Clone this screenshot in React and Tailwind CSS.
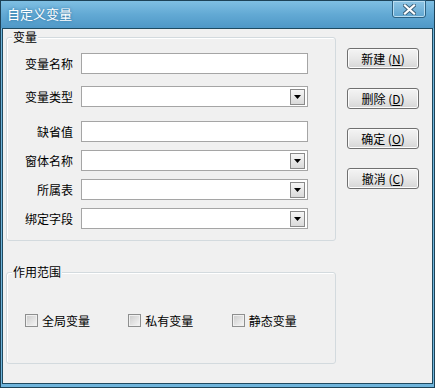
import React from "react";

const font = { fontFamily: '"Noto Sans CJK SC", "Liberation Sans", sans-serif' };

function DropArrow() {
    return (
        <div className="w-[15px] h-[16px] border border-[#8a8a8a] bg-gradient-to-b from-[#f6f6f6] to-[#dadada] flex items-center justify-center">
            <svg width="7" height="4" viewBox="0 0 7 4">
                <path d="M0 0H7L3.5 4Z" fill="#000" />
            </svg>
        </div>
    );
}

function Field({ label, select, className }) {
    return (
        <div className={"flex items-center h-[21px] " + className}>
            <div className="w-[66px] text-right text-[12px] leading-none text-black">{label}</div>
            <div className="ml-[8px] w-[227px] h-[21px] border border-[#a5a5a5] bg-white flex items-center justify-end pr-[2px]">
                {select && <DropArrow />}
            </div>
        </div>
    );
}

function Btn({ text, hot }) {
    return (
        <div className="w-[72px] h-[21px] rounded-[3px] border border-[#707070] bg-gradient-to-b from-[#f4f4f4] via-[#e8e8e8] to-[#d6d6d6] shadow-[inset_0_0_0_1px_#fcfcfc] flex items-center justify-center text-[12px] leading-none text-black">
            {text} (<span className="underline underline-offset-1">{hot}</span>)
        </div>
    );
}

function Check({ label }) {
    return (
        <div className="w-[105px] flex items-center">
            <div className="w-[13px] h-[13px] border border-[#8e8f8f] bg-gradient-to-br from-[#cbcbcb] to-[#f7f7f7] shadow-[inset_0_0_0_1px_#f0f0f0]" />
            <span className="ml-[4px] text-[12px] leading-none text-black">{label}</span>
        </div>
    );
}

export default function App() {
    return (
        <div className="w-[435px] h-[388px] flex flex-col bg-[#6fb4db] border border-[#1d4257]" style={font}>
            {/* 标题栏 */}
            <div className="h-[27px] flex justify-between bg-gradient-to-b from-[#7fbfe3] via-[#62a9d4] to-[#4f98c7]">
                <div className="pl-[6px] pt-[6px] text-[13px] leading-none text-white [text-shadow:0_0_3px_#2a6f9c]">自定义变量</div>
                <div className="mr-[8px] -mt-px w-[34px] h-[18px] rounded-b-[3px] border border-[#2d6283] bg-gradient-to-b from-[#8ec6e6] to-[#5fa5d0] shadow-[inset_0_0_0_1px_#b9def2] flex items-center justify-center">
                    <svg width="13" height="11" viewBox="0 0 13 11">
                        <path d="M2 1.5L11 9.5M11 1.5L2 9.5" stroke="#3a5f78" strokeWidth="4" strokeLinecap="square" />
                        <path d="M2 1.5L11 9.5M11 1.5L2 9.5" stroke="#fff" strokeWidth="2.2" strokeLinecap="square" />
                    </svg>
                </div>
            </div>

            {/* 客户区 */}
            <div className="flex-1 mx-[1px] mb-[3px] bg-[#f0f0f0] border border-[#1e4a60] flex flex-col">
                <div className="flex">
                    <div className="relative ml-[3px] mt-[8px] w-[330px] h-[204px] border border-[#d3dade] rounded-[3px] shadow-[inset_1px_1px_0_#fff]">
                        <div className="absolute left-[5px] -top-[7px] px-[1px] bg-[#f0f0f0] text-[12px] leading-none text-black">变量</div>
                        <Field label="变量名称" className="mt-[15px]" />
                        <Field label="变量类型" select className="mt-[12px]" />
                        <Field label="缺省值" className="mt-[14px]" />
                        <Field label="窗体名称" select className="mt-[8px]" />
                        <Field label="所属表" select className="mt-[8px]" />
                        <Field label="绑定字段" select className="mt-[8px]" />
                    </div>
                    <div className="ml-[11px] mt-[19px] flex flex-col gap-[19px]">
                        <Btn text="新建" hot="N" />
                        <Btn text="删除" hot="D" />
                        <Btn text="确定" hot="O" />
                        <Btn text="撤消" hot="C" />
                    </div>
                </div>

                <div className="relative ml-[3px] mt-[31px] w-[330px] h-[92px] border border-[#d3dade] rounded-[3px] shadow-[inset_1px_1px_0_#fff]">
                    <div className="absolute left-[5px] -top-[7px] px-[1px] bg-[#f0f0f0] text-[12px] leading-none text-black">作用范围</div>
                    <div className="flex pl-[18px] mt-[41px]">
                        <Check label="全局变量" />
                        <Check label="私有变量" />
                        <Check label="静态变量" />
                    </div>
                </div>
            </div>
        </div>
    );
}
